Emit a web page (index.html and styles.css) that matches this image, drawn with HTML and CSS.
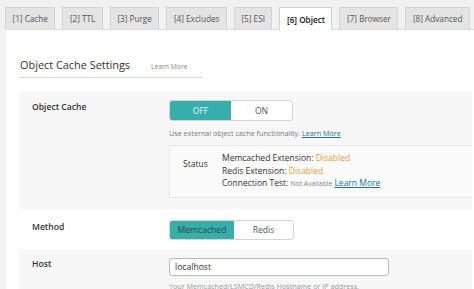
FILE: index.html
```html
<!DOCTYPE html>
<html>
<head>
<meta charset="utf-8">
<link rel="stylesheet" href="styles.css">
</head>
<body>
<div class="page">
  <nav class="tabs">
    <span class="tab">[1] Cache</span>
    <span class="tab">[2] TTL</span>
    <span class="tab">[3] Purge</span>
    <span class="tab">[4] Excludes</span>
    <span class="tab">[5] ESI</span>
    <span class="tab active">[6] Object</span>
    <span class="tab">[7] Browser</span>
    <span class="tab">[8] Advanced</span>
  </nav>
  <main class="panel">
    <h3 class="title">Object Cache Settings <a class="title-link">Learn More</a></h3>
    <div class="table">
      <div class="row gray first">
        <div class="label">Object Cache</div>
        <div class="value">
          <div class="switch">
            <span class="opt on-teal light">OFF</span>
            <span class="opt">ON</span>
          </div>
          <div class="desc">Use external object cache functionality. <a class="link">Learn More</a></div>
          <div class="status">
            <div class="status-label">Status</div>
            <div class="status-lines">
              <div>Memcached Extension: <span class="warn">Disabled</span></div>
              <div>Redis Extension: <span class="warn">Disabled</span></div>
              <div>Connection Test: <span class="muted">Not Available</span> <a class="link">Learn More</a></div>
            </div>
          </div>
        </div>
      </div>
      <div class="row white method-row">
        <div class="label">Method</div>
        <div class="value">
          <div class="switch method">
            <span class="opt on-teal dark wide">Memcached</span>
            <span class="opt narrow">Redis</span>
          </div>
        </div>
      </div>
      <div class="row gray host-row">
        <div class="label">Host</div>
        <div class="value">
          <div class="input">localhost</div>
          <div class="desc">Your Memcached/LSMCD/Redis Hostname or IP address.</div>
        </div>
      </div>
    </div>
  </main>
</div>
</body>
</html>
```

FILE: styles.css
```css
html, body {
  margin: 0;
  padding: 0;
  background: #f1f1f1;
  font-family: "Open Sans", "Noto Sans", sans-serif;
  color: #444;
  overflow: hidden;
}
.page {
  width: 474px;
  height: 289px;
  overflow: hidden;
}
.tabs {
  display: flex;
  gap: 7px;
  padding: 7px 0 0 5px;
  height: 22px;
  position: relative;
  z-index: 1;
}
.tab {
  display: flex;
  align-items: center;
  padding: 0 6.5px;
  height: 21px;
  background: #e4e4e4;
  border: 1px solid #d3d3d3;
  border-bottom: none;
  font-size: 8.2px;
  color: #555;
  white-space: nowrap;
}
.tab.active {
  background: #fff;
  color: #111;
  font-weight: 600;
  height: 22px;
}
.panel {
  background: #fff;
  margin-left: 6px;
  border-top: 1px solid #dcdcdc;
  padding: 22px 2px 0 13px;
  height: 300px;
}
.title {
  margin: 0;
  display: inline-block;
  font-weight: 400;
  font-size: 10.9px;
  color: #333;
  padding: 0 1px 3px 1px;
  border-bottom: 1px solid #d8d8d8;
  width: 182px;
  line-height: 14px;
}
.title-link {
  font-size: 6.8px;
  color: #888;
  margin-left: 18px;
}
.table {
  margin-top: 13px;
}
.row {
  display: flex;
}
.row.gray { background: #f7f7f7; }
.row.white { background: #fff; }
.label {
  width: 150px;
  flex: none;
  box-sizing: border-box;
  padding: 10px 0 0 13px;
  font-size: 8.6px;
  font-weight: 600;
  color: #333;
  line-height: 12px;
}
.value {
  flex: 1;
  padding: 9px 0 12px 0;
}
.first .value { padding: 9px 0 12px 0; }
.method-row .value { padding: 10px 0 10px 0; }
.method-row .label { padding-top: 11px; }
.host-row .value { padding: 8px 0 4px 0; }
.host-row .label { padding-top: 8px; }
.switch {
  display: flex;
  width: max-content;
  height: 21px;
  border: 1px solid #d4d4d4;
  border-radius: 3px;
  overflow: hidden;
  box-sizing: border-box;
  background: #fff;
}
.switch.method { height: 20px; }
.opt {
  width: 61px;
  display: flex;
  align-items: center;
  justify-content: center;
  font-size: 8.6px;
  color: #555;
}
.opt.wide { width: 64px; }
.opt.narrow { width: 59px; }
.on-teal { background: #36aeab; }
.on-teal.light { color: #e6f6f5; }
.on-teal.dark { color: #2b4a49; }
.desc {
  font-size: 7.2px;
  color: #777;
  margin-top: 7px;
  line-height: 10px;
}
.link {
  color: #1e6fa8;
  text-decoration: underline;
}
.status {
  display: flex;
  margin-top: 7px;
  background: #fbfbfb;
  border: 1px solid #e6e6e6;
  border-right: none;
  padding: 6px 0 6px 13px;
  font-size: 8.5px;
  line-height: 12.5px;
  color: #333;
}
.status-label {
  width: 39px;
  padding-top: 6px;
}
.warn { color: #e89b3c; }
.muted { color: #888; font-size: 6.8px; }
.input {
  width: 220px;
  height: 18px;
  box-sizing: border-box;
  border: 1px solid #b9b9b9;
  border-radius: 3px;
  background: #fff;
  font-size: 8.6px;
  color: #333;
  padding-left: 5px;
  display: flex;
  align-items: center;
}
.host-row .desc { margin-top: 5px; color: #999; }
```
